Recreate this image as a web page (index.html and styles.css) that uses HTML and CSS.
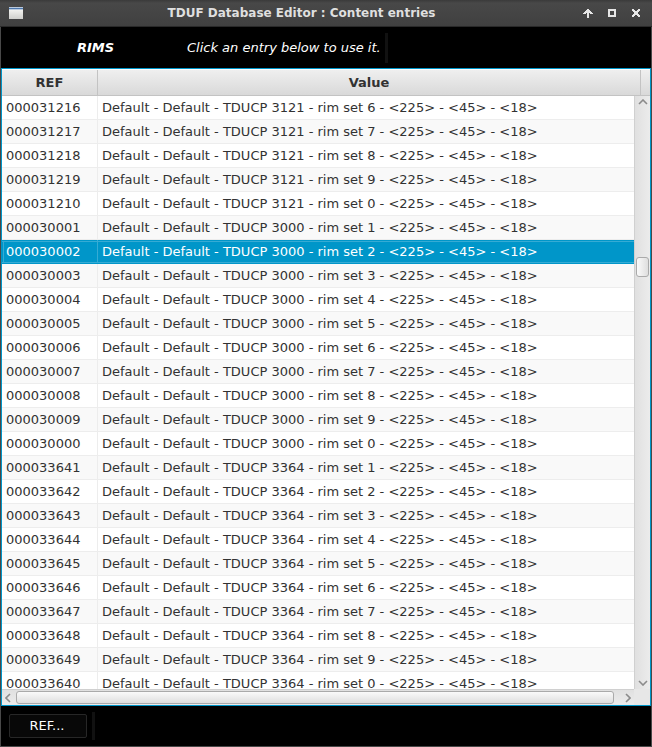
FILE: index.html
```html
<!DOCTYPE html>
<html lang="en">
<head>
<meta charset="utf-8">
<title>TDUF Database Editor : Content entries</title>
<link rel="stylesheet" href="styles.css">
</head>
<body>
<div class="window">
  <header class="titlebar">
    <span class="app-icon"></span>
    <h1 class="title">TDUF Database Editor : Content entries</h1>
    <svg class="controls" width="60" height="12" viewBox="0 0 60 12" shape-rendering="crispEdges" fill="#e6e6e6">
      <path d="M5 2h2v1h1v1h1v1h1v1h1v1H8V6H7v5H5V6H4v1H1V6h1V5h1V4h1V3h1z"/>
      <path fill-rule="evenodd" d="M26 2h8v8h-8zM28 4v4h4V4z"/>
      <path d="M50 2h2v1h1v1h2V3h1V2h2v2h-1v1h-1v2h1v1h1v2h-2V9h-1V8h-2v1h-1v1h-2V8h1V7h1V5h-1V4h-1z"/>
    </svg>
  </header>
  <div class="info">
    <b class="topic">RIMS</b>
    <span class="hint">Click an entry below to use it.</span>
    <span class="separator"></span>
  </div>
  <main class="table">
    <div class="head"><div class="th">REF</div><div class="th">Value</div><div class="th"></div></div>
    <div class="content">
      <div class="rows">
        <div class="row"><span>000031216</span><span>Default - Default - TDUCP 3121 - rim set 6 - &lt;225&gt; - &lt;45&gt; - &lt;18&gt;</span></div>
        <div class="row"><span>000031217</span><span>Default - Default - TDUCP 3121 - rim set 7 - &lt;225&gt; - &lt;45&gt; - &lt;18&gt;</span></div>
        <div class="row"><span>000031218</span><span>Default - Default - TDUCP 3121 - rim set 8 - &lt;225&gt; - &lt;45&gt; - &lt;18&gt;</span></div>
        <div class="row"><span>000031219</span><span>Default - Default - TDUCP 3121 - rim set 9 - &lt;225&gt; - &lt;45&gt; - &lt;18&gt;</span></div>
        <div class="row"><span>000031210</span><span>Default - Default - TDUCP 3121 - rim set 0 - &lt;225&gt; - &lt;45&gt; - &lt;18&gt;</span></div>
        <div class="row"><span>000030001</span><span>Default - Default - TDUCP 3000 - rim set 1 - &lt;225&gt; - &lt;45&gt; - &lt;18&gt;</span></div>
        <div class="row selected"><span>000030002</span><span>Default - Default - TDUCP 3000 - rim set 2 - &lt;225&gt; - &lt;45&gt; - &lt;18&gt;</span></div>
        <div class="row"><span>000030003</span><span>Default - Default - TDUCP 3000 - rim set 3 - &lt;225&gt; - &lt;45&gt; - &lt;18&gt;</span></div>
        <div class="row"><span>000030004</span><span>Default - Default - TDUCP 3000 - rim set 4 - &lt;225&gt; - &lt;45&gt; - &lt;18&gt;</span></div>
        <div class="row"><span>000030005</span><span>Default - Default - TDUCP 3000 - rim set 5 - &lt;225&gt; - &lt;45&gt; - &lt;18&gt;</span></div>
        <div class="row"><span>000030006</span><span>Default - Default - TDUCP 3000 - rim set 6 - &lt;225&gt; - &lt;45&gt; - &lt;18&gt;</span></div>
        <div class="row"><span>000030007</span><span>Default - Default - TDUCP 3000 - rim set 7 - &lt;225&gt; - &lt;45&gt; - &lt;18&gt;</span></div>
        <div class="row"><span>000030008</span><span>Default - Default - TDUCP 3000 - rim set 8 - &lt;225&gt; - &lt;45&gt; - &lt;18&gt;</span></div>
        <div class="row"><span>000030009</span><span>Default - Default - TDUCP 3000 - rim set 9 - &lt;225&gt; - &lt;45&gt; - &lt;18&gt;</span></div>
        <div class="row"><span>000030000</span><span>Default - Default - TDUCP 3000 - rim set 0 - &lt;225&gt; - &lt;45&gt; - &lt;18&gt;</span></div>
        <div class="row"><span>000033641</span><span>Default - Default - TDUCP 3364 - rim set 1 - &lt;225&gt; - &lt;45&gt; - &lt;18&gt;</span></div>
        <div class="row"><span>000033642</span><span>Default - Default - TDUCP 3364 - rim set 2 - &lt;225&gt; - &lt;45&gt; - &lt;18&gt;</span></div>
        <div class="row"><span>000033643</span><span>Default - Default - TDUCP 3364 - rim set 3 - &lt;225&gt; - &lt;45&gt; - &lt;18&gt;</span></div>
        <div class="row"><span>000033644</span><span>Default - Default - TDUCP 3364 - rim set 4 - &lt;225&gt; - &lt;45&gt; - &lt;18&gt;</span></div>
        <div class="row"><span>000033645</span><span>Default - Default - TDUCP 3364 - rim set 5 - &lt;225&gt; - &lt;45&gt; - &lt;18&gt;</span></div>
        <div class="row"><span>000033646</span><span>Default - Default - TDUCP 3364 - rim set 6 - &lt;225&gt; - &lt;45&gt; - &lt;18&gt;</span></div>
        <div class="row"><span>000033647</span><span>Default - Default - TDUCP 3364 - rim set 7 - &lt;225&gt; - &lt;45&gt; - &lt;18&gt;</span></div>
        <div class="row"><span>000033648</span><span>Default - Default - TDUCP 3364 - rim set 8 - &lt;225&gt; - &lt;45&gt; - &lt;18&gt;</span></div>
        <div class="row"><span>000033649</span><span>Default - Default - TDUCP 3364 - rim set 9 - &lt;225&gt; - &lt;45&gt; - &lt;18&gt;</span></div>
        <div class="row"><span>000033640</span><span>Default - Default - TDUCP 3364 - rim set 0 - &lt;225&gt; - &lt;45&gt; - &lt;18&gt;</span></div>
      </div>
      <div class="vbar">
        <svg class="arrow" width="10" height="6" viewBox="0 0 10 6"><path d="M1 5L5 1L9 5"/></svg>
        <span class="vthumb"></span>
        <svg class="arrow" width="10" height="6" viewBox="0 0 10 6"><path d="M1 1L5 5L9 1"/></svg>
      </div>
      <div class="hbar">
        <svg class="arrow" width="6" height="10" viewBox="0 0 6 10"><path d="M5 1L1 5L5 9"/></svg>
        <span class="hthumb"></span>
        <svg class="arrow" width="6" height="10" viewBox="0 0 6 10"><path d="M1 1L5 5L1 9"/></svg>
      </div>
      <div class="corner"></div>
    </div>
  </main>
  <footer class="toolbar">
    <button class="ref-button">REF...</button>
    <span class="separator"></span>
  </footer>
</div>
</body>
</html>
```
FILE: styles.css
```css
* { box-sizing: border-box; }
body {
  margin: 0;
  font: 13px/24px "DejaVu Sans", sans-serif;
  color: #323232;
  background: #484848;
}
.window {
  width: 652px;
  height: 747px;
  display: grid;
  grid-template-rows: 27px 41px 638px 40px;
  padding: 0 1px 1px;
  background: #484848;
  overflow: hidden;
}
.titlebar {
  display: grid;
  grid-template-columns: 60px 1fr 70px;
  align-items: center;
  margin: 0 -1px;
  padding: 0 1px;
  background: linear-gradient(#3a3a3a, #484848 3px, #404040);
  border-bottom: 1px solid #292929;
}
.app-icon {
  width: 14px;
  height: 12px;
  margin-left: 8px;
  background: linear-gradient(#b9c9dd 1px, #4c76ab 1px, #4c76ab 2px, #b9c9dd 2px, #b9c9dd 3px, #f1f1ee 3px, #cfcfcc);
}
.title {
  margin: 0 39px 0 0;
  font-size: 12px;
  line-height: 24px;
  color: #dfdfdf;
  text-align: center;
}
.controls { display: block; margin-left: 1px; }
.info {
  display: flex;
  align-items: center;
  background: #000;
  color: #fff;
  font-style: italic;
  white-space: nowrap;
}
.topic { width: 186px; padding-left: 76px; }
.hint { width: 198px; }
.separator { width: 3px; height: 30px; background: #111; }
.table {
  display: grid;
  grid-template-rows: 27px 1fr;
  border: 1px solid #0096c9;
  min-height: 0;
}
.head {
  display: grid;
  grid-template-columns: 96px 543px 1fr;
  background: linear-gradient(#efefef, #d9d9d9);
  border-top: 1px solid #fff;
  border-bottom: 1px solid #c3c3c3;
}
.th {
  border-right: 1px solid #c3c3c3;
  font-weight: bold;
  line-height: 25px;
  text-align: center;
}
.th:last-child { border-right: 0; }
.content {
  display: grid;
  grid-template-columns: 632px 16px;
  grid-template-rows: 593px 16px;
  min-height: 0;
}
.rows { overflow: hidden; background: #fff; }
.row {
  display: grid;
  grid-template-columns: 96px 1fr;
  height: 24px;
  border-bottom: 1px solid #ededed;
  white-space: pre;
}
.row:nth-child(even) { background: #f9f9f9; }
.row span { height: 23px; padding-left: 4px; }
.row span:first-child { border-right: 1px solid #ededed; }
.row.selected {
  background: linear-gradient(#36abd4, #36abd4) 1px 1px / 1px 22px no-repeat,
    linear-gradient(#0096c9 1px, #36abd4 1px, #36abd4 2px, #0096c9 2px, #0096c9 22px, #36abd4 22px);
  color: #fff;
  border-bottom-color: #0096c9;
}
.row.selected span:first-child { border-right-color: #36abd4; }
.vbar {
  display: flex;
  flex-direction: column;
  align-items: center;
  padding: 3px 0;
  border-left: 1px solid #d0d0d0;
  background: linear-gradient(90deg, #e0e0e0, #ececec);
}
.arrow { flex: none; fill: none; stroke: #8b8b8b; stroke-width: 1.6; }
.vthumb {
  width: 13px;
  height: 20px;
  margin: 152px 0 auto;
  border: 1px solid #aaa;
  border-radius: 3px;
  background: linear-gradient(90deg, #fafafa, #dedede);
}
.hbar {
  display: flex;
  align-items: center;
  padding: 0 1px 0 3px;
  border-top: 1px solid #d0d0d0;
  background: linear-gradient(#e0e0e0, #ececec);
}
.hthumb {
  width: 598px;
  height: 13px;
  margin: 0 11px 0 5px;
  border: 1px solid #aaa;
  border-radius: 3px;
  background: linear-gradient(#fafafa, #dedede);
}
.corner { background: #e7e7e7; }
.toolbar {
  display: flex;
  align-items: center;
  gap: 5px;
  padding-left: 8px;
  background: #000;
}
.toolbar .separator { height: 28px; }
.ref-button {
  width: 78px;
  height: 24px;
  padding: 0 2px 0 0;
  border: 1px solid #272727;
  border-radius: 2px;
  background: #080808;
  color: #fff;
  font: inherit;
  line-height: 22px;
}
```
